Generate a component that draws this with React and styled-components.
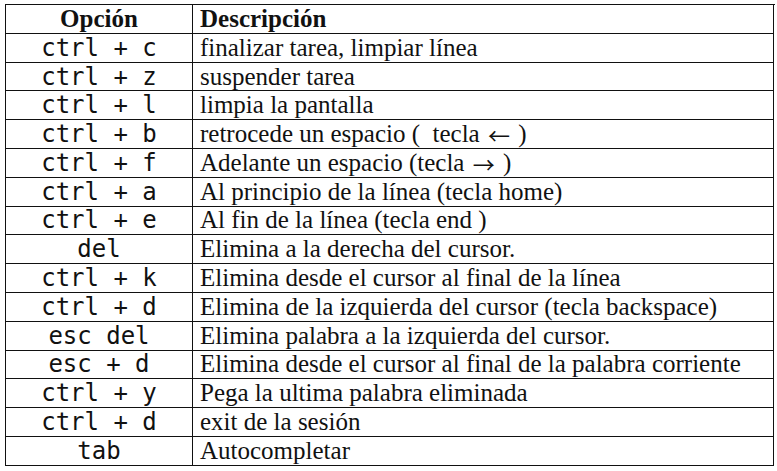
import React from 'react';
import styled, { createGlobalStyle } from 'styled-components';

const GlobalStyle = createGlobalStyle`
  body {
    margin: 0;
    background: #ffffff;
  }
`;

const Page = styled.div`
  padding: 4px 0 0 5px;
`;

const Table = styled.div`
  display: grid;
  grid-template-columns: 187px 581px;
  grid-auto-rows: 28.8px;
  width: 769px;
  border-left: 1px solid #111;
  border-top: 1px solid #111;
  color: #111;
`;

const Cell = styled.div`
  display: flex;
  align-items: center;
  border-right: 1px solid #111;
  border-bottom: 1px solid #111;
  white-space: pre;
`;

const KeyCell = styled(Cell)`
  justify-content: center;
  font-family: ${(p) => (p.$head ? '"Liberation Serif", serif' : '"DejaVu Sans Mono", monospace')};
  font-size: ${(p) => (p.$head ? '25px' : '24px')};
  font-weight: ${(p) => (p.$head ? 700 : 400)};
`;

const DescCell = styled(Cell)`
  padding-left: 7px;
  font-family: "Liberation Serif", "Times New Roman", serif;
  font-size: 25px;
  font-weight: ${(p) => (p.$head ? 700 : 400)};
`;

const Arrow = styled.span`
  font-family: "Noto Sans CJK JP", "DejaVu Sans", sans-serif;
  font-size: 22px;
  line-height: 24px;
  margin: 0 2px;
`;

// split description so arrow glyphs get a font that actually has them
function renderDesc(text) {
  return text.split(/([←→])/).map((part, i) =>
    part === '←' || part === '→' ? <Arrow key={i}>{part}</Arrow> : part
  );
}

const rows = [
  ['ctrl + c', 'finalizar tarea, limpiar línea'],
  ['ctrl + z', 'suspender tarea'],
  ['ctrl + l', 'limpia la pantalla'],
  ['ctrl + b', 'retrocede un espacio (  tecla ← )'],
  ['ctrl + f', 'Adelante un espacio (tecla → )'],
  ['ctrl + a', 'Al principio de la línea (tecla home)'],
  ['ctrl + e', 'Al fin de la línea (tecla end )'],
  ['del', 'Elimina a la derecha del cursor.'],
  ['ctrl + k', 'Elimina desde el cursor al final de la línea'],
  ['ctrl + d', 'Elimina de la izquierda del cursor (tecla backspace)'],
  ['esc del', 'Elimina palabra a la izquierda del cursor.'],
  ['esc + d', 'Elimina desde el cursor al final de la palabra corriente'],
  ['ctrl + y', 'Pega la ultima palabra eliminada'],
  ['ctrl + d', 'exit de la sesión'],
  ['tab', 'Autocompletar'],
];

export default function App() {
  return (
    <Page>
      <GlobalStyle />
      <Table>
        <KeyCell $head>Opción</KeyCell>
        <DescCell $head>Descripción</DescCell>
        {rows.map(([key, desc], i) => (
          <React.Fragment key={i}>
            <KeyCell>{key}</KeyCell>
            <DescCell>{renderDesc(desc)}</DescCell>
          </React.Fragment>
        ))}
      </Table>
    </Page>
  );
}
